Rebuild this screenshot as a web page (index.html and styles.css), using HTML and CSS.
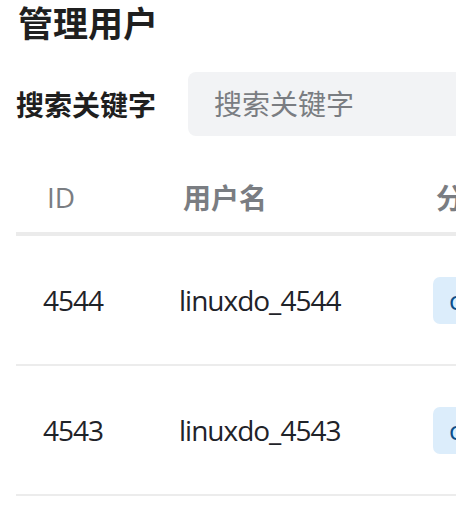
FILE: index.html
```html
<!DOCTYPE html>
<html lang="zh-CN">
<head>
    <meta charset="UTF-8">
    <meta name="viewport" content="width=device-width, initial-scale=1.0">
    <title>管理用户</title>
    <link rel="stylesheet" href="styles.css">
</head>
<body>

<div class="page">
    <h1>管理用户</h1>

    <div class="search-row">
        <label class="search-label" for="keyword">搜索关键字</label>
        <input id="keyword" class="search-input" type="text" placeholder="搜索关键字">
    </div>

    <table class="user-table">
        <colgroup>
            <col class="col-id">
            <col class="col-name">
            <col class="col-group">
        </colgroup>
        <thead>
            <tr>
                <th class="head-id">ID</th>
                <th>用户名</th>
                <th>分组</th>
            </tr>
        </thead>
        <tbody>
            <tr>
                <td>4544</td>
                <td>linuxdo_4544</td>
                <td><span class="tag">common</span></td>
            </tr>
            <tr>
                <td>4543</td>
                <td>linuxdo_4543</td>
                <td><span class="tag">common</span></td>
            </tr>
        </tbody>
    </table>
</div>

</body>
</html>
```

FILE: styles.css
```css
body {
    font-family: "Open Sans", "Noto Sans CJK SC", sans-serif;
    background-color: #fff;
    color: #1f2329;
    margin: 0;
    overflow: hidden;
}

.page {
    padding: 4px 0 0 16px;
    width: 800px;
}

h1 {
    font-size: 35px;
    font-weight: 700;
    line-height: 40px;
    margin: 0 0 0 2px;
    color: #1f1f1f;
}

.search-row {
    display: flex;
    align-items: center;
    margin-top: 28px;
}

.search-label {
    font-size: 28px;
    font-weight: 700;
    color: #1f1f1f;
    width: 172px;
}

.search-input {
    font-family: inherit;
    font-size: 28px;
    height: 64px;
    width: 600px;
    box-sizing: border-box;
    padding: 0 26px;
    border: none;
    border-radius: 8px;
    background-color: #f2f3f5;
    color: #1f2329;
    outline: none;
}

.search-input::placeholder {
    color: #7a7d82;
}

.user-table {
    border-collapse: collapse;
    table-layout: fixed;
    margin-top: 26px;
    width: 760px;
}

.col-id {
    width: 136px;
}

.col-name {
    width: 253px;
}

.user-table th,
.user-table td {
    font-family: "Open Sans", "Noto Sans CJK SC", sans-serif;
    text-align: left;
    font-size: 28px;
    white-space: nowrap;
}

.user-table th {
    height: 70px;
    padding: 0 0 0 31px;
    font-weight: 700;
    color: #7a7d82;
    border-bottom: 4px solid #ebebeb;
}

.user-table th.head-id {
    font-weight: 400;
}

.user-table td {
    height: 128px;
    padding: 0 0 0 27px;
    border-bottom: 2px solid #ececec;
    letter-spacing: -1px;
}

.tag {
    display: inline-block;
    height: 47px;
    line-height: 47px;
    padding: 0 16px;
    border-radius: 7px;
    background-color: #dcedfb;
    color: #0b4f8a;
    font-size: 26px;
    letter-spacing: 0;
}

td .tag {
    margin-left: 1px;
}
```
